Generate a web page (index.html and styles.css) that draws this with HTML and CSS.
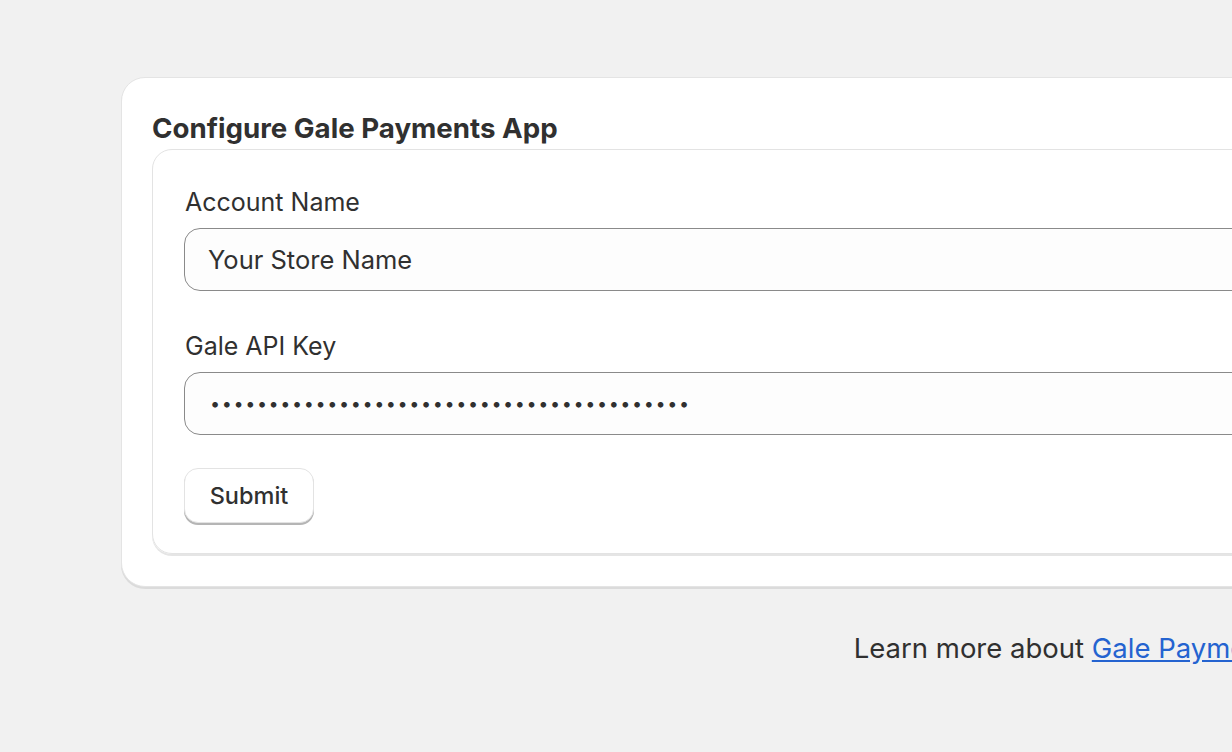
FILE: index.html
```html
<!DOCTYPE html>
<html lang="en">
<head>
<meta charset="utf-8">
<title>Configure Gale Payments App</title>
<link rel="stylesheet" href="styles.css">
</head>
<body>
<div class="page">
  <section class="card">
    <h1 class="card-title">Configure Gale Payments App</h1>
    <form class="form-card">
      <div class="field">
        <label class="field-label" for="account">Account Name</label>
        <input class="field-input" id="account" type="text" value="Your Store Name">
      </div>
      <div class="field">
        <label class="field-label" for="apikey">Gale API Key</label>
        <input class="field-input field-password" id="apikey" type="password" value="abcdefghijabcdefghijabcdefghijabcdefghijk">
      </div>
      <div class="actions">
        <button class="btn" type="button">Submit</button>
      </div>
    </form>
  </section>
  <p class="footer">Learn more about <a href="#" class="footer-link">Gale Payments App</a></p>
</div>
</body>
</html>
```

FILE: styles.css
```css
* { box-sizing: border-box; }

html, body {
  margin: 0;
  padding: 0;
  background: #f1f1f1;
  overflow: hidden;
}

body {
  font-family: Inter, "Noto Sans", "Liberation Sans", sans-serif;
  color: #303030;
}

.page {
  width: 2200px;
  padding: 77px 121px 0;
}

.card {
  background: #ffffff;
  border: 1px solid #e4e4e4;
  border-radius: 24px;
  box-shadow: 0 2px 0 rgba(0, 0, 0, 0.09);
  padding: 34px 31px 32px 30px;
}

.card-title {
  margin: 0 0 5px;
  font-size: 27.7px;
  line-height: 32px;
  font-weight: 650;
  color: #303030;
}

.form-card {
  border: 1px solid #e3e3e3;
  border-radius: 20px;
  box-shadow: 0 2px 0 rgba(0, 0, 0, 0.1);
  padding: 30px 31px 30px;
  display: flex;
  flex-direction: column;
  gap: 33px;
}

.field {
  display: flex;
  flex-direction: column;
  gap: 10px;
}

.field-label {
  margin-top: 6px;
  padding-left: 1px;
  font-size: 25px;
  line-height: 32px;
  font-weight: 400;
  color: #303030;
}

.field-input {
  height: 63px;
  border: 1px solid #8a8a8a;
  border-radius: 16px;
  background: #fdfdfd;
  padding: 0 23px;
  font-family: inherit;
  font-size: 25.5px;
  color: #303030;
  outline: none;
}

.field-password {
  font-size: 18px;
  letter-spacing: 1.6px;
  padding-left: 25px;
}

.actions {
  display: flex;
}

.btn {
  width: 130px;
  height: 55px;
  border: 1px solid #e3e3e3;
  border-radius: 14px;
  background: #ffffff;
  box-shadow: 0 2px 0 #b5b5b5;
  font-family: inherit;
  font-size: 23.5px;
  font-weight: 550;
  color: #303030;
  padding: 0;
}

.footer {
  margin: 45px 0 0;
  text-align: center;
  font-size: 27.5px;
  line-height: 32px;
  color: #303030;
}

.footer-link {
  color: #2463d0;
  text-decoration: underline;
}
```
